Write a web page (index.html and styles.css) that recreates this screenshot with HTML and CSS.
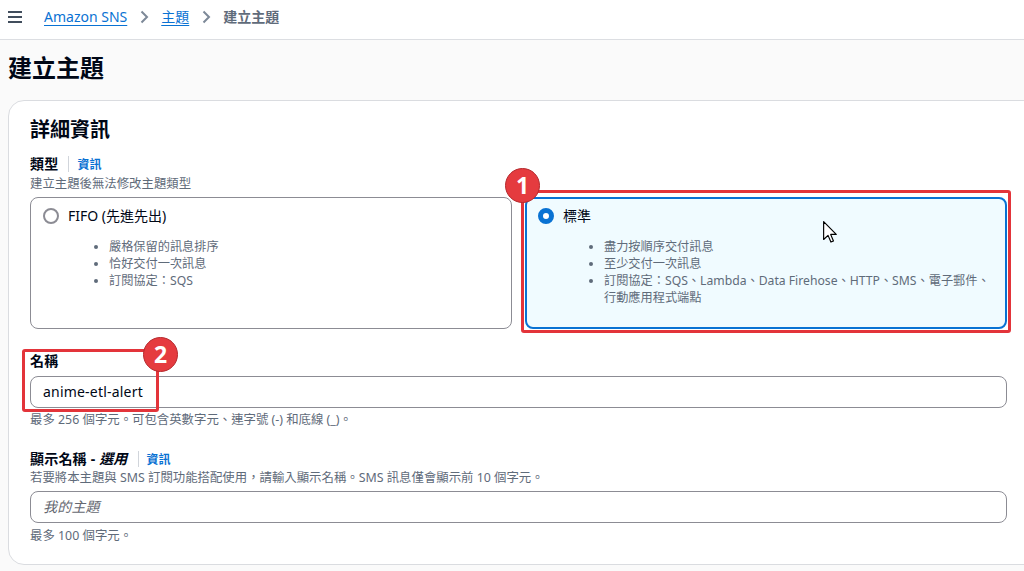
FILE: index.html
```html
<!DOCTYPE html>
<html lang="zh-Hant">
<head>
<meta charset="utf-8">
<title>建立主題</title>
<link rel="stylesheet" href="styles.css">
</head>
<body>
<header class="topbar">
  <svg class="menu-icon" width="16" height="16" viewBox="0 0 16 16"><path d="M15 3H1M15 8H1M15 13H1" stroke="#414d5c" stroke-width="2" fill="none"/></svg>
  <nav class="crumbs">
    <a class="crumb-link" href="#">Amazon SNS</a>
    <svg class="chev" width="16" height="16" viewBox="0 0 16 16"><path d="M5.5 2.5l5.5 5.5-5.5 5.5" stroke="#7d8998" stroke-width="2" fill="none"/></svg>
    <a class="crumb-link" href="#">主題</a>
    <svg class="chev" width="16" height="16" viewBox="0 0 16 16"><path d="M5.5 2.5l5.5 5.5-5.5 5.5" stroke="#7d8998" stroke-width="2" fill="none"/></svg>
    <span class="crumb-current">建立主題</span>
  </nav>
</header>

<main class="page">
  <h1 class="page-title">建立主題</h1>

  <section class="card">
    <h2 class="card-title">詳細資訊</h2>

    <div class="field">
      <div class="label-row"><span class="label">類型</span><span class="sep"></span><a class="info" href="#">資訊</a></div>
      <div class="desc">建立主題後無法修改主題類型</div>
      <div class="tiles">
        <div class="tile">
          <div class="tile-head"><span class="radio"></span><span class="tile-title">FIFO (先進先出)</span></div>
          <ul class="tile-list">
            <li>嚴格保留的訊息排序</li>
            <li>恰好交付一次訊息</li>
            <li>訂閱協定：SQS</li>
          </ul>
        </div>
        <div class="tile selected">
          <div class="tile-head"><span class="radio on"></span><span class="tile-title">標準</span></div>
          <ul class="tile-list">
            <li>盡力按順序交付訊息</li>
            <li>至少交付一次訊息</li>
            <li>訂閱協定：SQS、Lambda、Data Firehose、HTTP、SMS、電子郵件、<br>行動應用程式端點</li>
          </ul>
        </div>
      </div>
    </div>

    <div class="field name-field">
      <div class="label-row"><span class="label">名稱</span></div>
      <div class="input">anime-etl-alert</div>
      <div class="hint">最多 256 個字元。可包含英數字元、連字號 (-) 和底線 (_)。</div>
    </div>

    <div class="field display-field">
      <div class="label-row"><span class="label">顯示名稱 - <i>選用</i></span><span class="sep"></span><a class="info" href="#">資訊</a></div>
      <div class="desc">若要將本主題與 SMS 訂閱功能搭配使用，請輸入顯示名稱。SMS 訊息僅會顯示前 10 個字元。</div>
      <div class="input placeholder">我的主題</div>
      <div class="hint">最多 100 個字元。</div>
    </div>
  </section>
</main>

<div class="mark mark-1"></div>
<div class="mark mark-2"></div>
<div class="badge badge-1">1</div>
<div class="badge badge-2">2</div>
<svg class="cursor" width="14" height="22" viewBox="0 0 12 19"><path d="M0.5 0.5V16L4.3 12.4L6.8 18.2L9 17.2L6.6 11.6H11.4Z" fill="#fff" stroke="#000" stroke-width="1" stroke-linejoin="round"/></svg>
</body>
</html>
```

FILE: styles.css
```css
* { box-sizing: border-box; }

html, body {
  margin: 0;
  padding: 0;
}

body {
  position: relative;
  width: 1024px;
  height: 571px;
  overflow: hidden;
  background: #fafafa;
  font-family: "Noto Sans", "Noto Sans CJK TC", sans-serif;
  color: #000716;
}

.topbar {
  height: 40px;
  background: #fff;
  border-bottom: 1px solid #dcdee2;
  display: flex;
  align-items: flex-start;
  padding: 9px 0 0 7px;
}

.menu-icon {
  display: block;
  flex: none;
}

.crumbs {
  display: flex;
  align-items: center;
  height: 20px;
  margin-top: -2px;
  margin-left: 21px;
  font-size: 14px;
  line-height: 20px;
}

.crumb-link {
  color: #0972d3;
  text-decoration: underline;
  text-underline-offset: 3px;
  text-decoration-thickness: 1px;
}

.chev {
  display: block;
  margin: 0 9px;
}

.crumb-current {
  color: #5f6b7a;
  font-weight: 700;
}

.page {
  padding: 0 0 0 8px;
}

.page-title {
  margin: 13px 0 17px;
  font-size: 24px;
  line-height: 30px;
  font-weight: 700;
}

.card {
  width: 1050px;
  background: #fff;
  border: 1px solid #dadce0;
  border-radius: 16px;
  padding: 17px 50px 20px 21px;
}

.card-title {
  margin: 0 0 12px;
  font-size: 20px;
  line-height: 24px;
  font-weight: 700;
}

.label-row {
  display: flex;
  align-items: center;
  height: 20px;
}

.label {
  font-size: 14px;
  line-height: 20px;
  font-weight: 700;
  letter-spacing: 0.2px;
}

.label i {
  font-style: italic;
}

.sep {
  width: 1px;
  height: 16px;
  background: #d1d5db;
  margin: 0 8px 0 10px;
}

.info {
  color: #0972d3;
  font-size: 12px;
  font-weight: 700;
  text-decoration: none;
}

.desc, .hint {
  font-size: 12.4px;
  line-height: 16px;
  color: #5f6b7a;
}

.desc {
  margin-top: 2px;
}

.tiles {
  display: grid;
  grid-template-columns: 1fr 1fr;
  column-gap: 13px;
  margin-top: 5px;
}

.tile {
  height: 132px;
  border: 1px solid #8c8c94;
  border-radius: 8px;
  padding: 7px 12px;
  background: #fff;
}

.tile.selected {
  border: 2px solid #0972d3;
  background: #f0fbff;
  padding: 6px 11px;
}

.tile-head {
  display: flex;
  align-items: center;
  gap: 9px;
  height: 22px;
}

.radio {
  width: 16px;
  height: 16px;
  border-radius: 50%;
  border: 2px solid #8c8c94;
  background: #fff;
  flex: none;
}

.radio.on {
  border: 5px solid #0972d3;
}

.tile-title {
  font-size: 14px;
  line-height: 20px;
}

.tile-list {
  margin: 11px 0 0;
  padding-left: 66px;
  font-size: 12.2px;
  line-height: 17px;
  color: #5f6b7a;
}

.name-field {
  margin-top: 22px;
}

.display-field {
  margin-top: 21px;
}

.display-field .desc {
  margin-top: 1px;
}

.input {
  height: 32px;
  border: 1px solid #8c8c94;
  border-radius: 8px;
  padding: 0 12px;
  font-size: 14px;
  line-height: 30px;
  letter-spacing: 0.2px;
  margin-top: 5px;
  background: #fff;
}

.input.placeholder {
  color: #656871;
  font-style: italic;
}

.hint {
  margin-top: 4px;
}

.display-field .hint {
  margin-top: 5px;
}

/* annotation overlays */
.mark {
  position: absolute;
  border: 3px solid #e3343a;
  border-radius: 3px;
}

.mark-1 {
  left: 521px;
  top: 190px;
  width: 490px;
  height: 143px;
}

.mark-2 {
  left: 22px;
  top: 349px;
  width: 137px;
  height: 63px;
}

.badge {
  position: absolute;
  width: 35px;
  height: 35px;
  border-radius: 50%;
  background: #e53b3f;
  border: 1px solid #b52a2e;
  color: #fff;
  font-family: "Noto Sans", sans-serif;
  font-weight: 700;
  font-size: 23px;
  line-height: 33px;
  text-align: center;
}

.badge-1 {
  left: 505px;
  top: 168px;
}

.badge-2 {
  left: 143px;
  top: 337px;
}

.cursor {
  position: absolute;
  left: 823px;
  top: 221px;
}
```
